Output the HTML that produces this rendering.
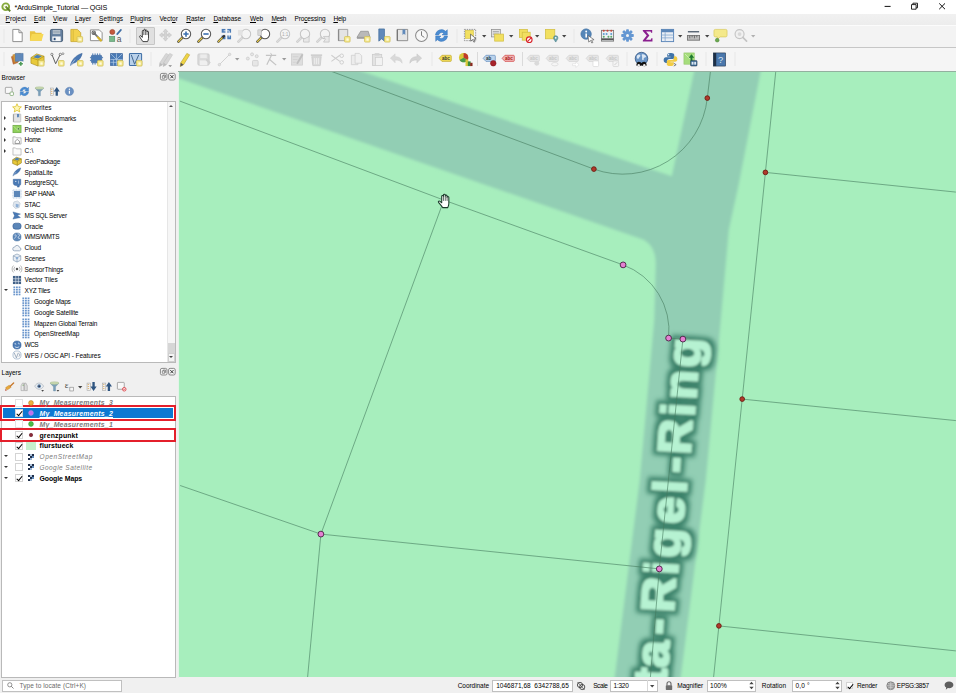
<!DOCTYPE html>
<html lang="en"><head><meta charset="utf-8"><title>*ArduSimple_Tutorial — QGIS</title>
<style>
html,body{margin:0;padding:0}
body{width:956px;height:693px;position:relative;overflow:hidden;background:#f0f0f0;font-family:"Liberation Sans",sans-serif;font-size:6.5px;line-height:10px;color:#000}
.t{position:absolute;white-space:pre;margin:0;padding:0}
.ic{position:absolute;overflow:visible;display:block}
.abs{position:absolute}
u{text-decoration:underline;text-decoration-thickness:.45px;text-underline-offset:.5px}
#titlebar{left:0;top:0;width:956px;height:13.6px;background:#fff}
#menubar{left:0;top:13.6px;width:956px;height:11px;background:linear-gradient(#f1f1f1,#ececec)}
#tb1{left:0;top:24.6px;width:956px;height:22.6px;background:#f3f3f3;border-top:.6px solid #fbfbfb;box-sizing:border-box}
#tb2{left:0;top:47.2px;width:956px;height:23.4px;background:#f5f5f5;border-top:.8px solid #c6c6c6;box-sizing:border-box}
.hd{position:absolute;width:2px;height:14px;background-image:radial-gradient(circle at 50% 50%,#c4c4c4 0,#c4c4c4 .45px,transparent .75px);background-size:2px 2px}
.sep{position:absolute;width:.6px;height:14px;background:#dadada}
#panbg{left:136px;top:27.2px;width:19px;height:17.8px;background:#e0e0e0;border:.6px solid #c6c6c6;border-radius:1px;box-sizing:border-box}
.tree{position:absolute;background:#fff;border:.6px solid #b9b9b9;box-sizing:border-box}
.cb{position:absolute;width:8px;height:8px;background:#fff;border:.6px solid #d4d4d4;box-sizing:border-box}
.cb.on::after{content:"";position:absolute;left:2px;top:-.2px;width:2.2px;height:4.8px;border:solid #000;border-width:0 1.7px 1.7px 0;transform:rotate(40deg)}
.cb.dim{border-color:#e2e2e2}
.arr{position:absolute;width:0;height:0;border-style:solid}
.arr.r{border-width:2px 0 2px 2.6px;border-color:transparent transparent transparent #333}
.arr.d{border-width:2.6px 2px 0 2px;border-color:#333 transparent transparent transparent}
.box{position:absolute;background:#fff;border:.6px solid #c0c0c0;box-sizing:border-box}
.red{position:absolute;border:2.8px solid #e41f2b;box-sizing:border-box}
</style></head><body>

<div id="titlebar" class="abs"></div>
<svg class="ic" style="left:1px;top:1.5px;width:10px;height:10.5px" viewBox="0 0 20 21"><circle cx="9.500" cy="9.500" r="6.800" fill="#fdfdf6" stroke="#86aa3c" stroke-width="3.800"/><path d="M9 9l9.500 9.500" stroke="#5d7f25" stroke-width="3.600"/><path d="M7.500 9l3.500 3.500" stroke="#b8cc5a" stroke-width="1.600"/></svg>
<span class="t" style="left:14.6px;top:2.50px;font-size:7.20px;letter-spacing:-0.160px;">*ArduSimple_Tutorial — QGIS</span>
<svg class="ic" style="left:880px;top:0;width:76px;height:13px" viewBox="880 0 76 13"><path d="M884.600 6.400h6" stroke="#111" stroke-width="1"/><path d="M911.500 4.600h4.600v4.600h-4.600zM912.900 4.600v-1.400h4.600v4.600h-1.400" fill="none" stroke="#111" stroke-width=".9"/><path d="M939.200 3.400l5.800 5.800M945 3.400l-5.800 5.800" stroke="#111" stroke-width="1"/></svg>
<div id="menubar" class="abs"></div>
<span class="t" style="left:5.6px;top:14.00px;font-size:6.50px;letter-spacing:0.050px;"><u>P</u>roject</span>
<span class="t" style="left:34px;top:14.00px;font-size:6.50px;letter-spacing:-0.005px;"><u>E</u>dit</span>
<span class="t" style="left:53px;top:14.00px;font-size:6.50px;letter-spacing:0.079px;"><u>V</u>iew</span>
<span class="t" style="left:75px;top:14.00px;font-size:6.50px;letter-spacing:0.004px;"><u>L</u>ayer</span>
<span class="t" style="left:99px;top:14.00px;font-size:6.50px;letter-spacing:0.087px;"><u>S</u>ettings</span>
<span class="t" style="left:130.3px;top:14.00px;font-size:6.50px;letter-spacing:-0.047px;"><u>P</u>lugins</span>
<span class="t" style="left:159.4px;top:14.00px;font-size:6.50px;letter-spacing:-0.009px;">Vect<u>o</u>r</span>
<span class="t" style="left:186.3px;top:14.00px;font-size:6.50px;letter-spacing:-0.009px;"><u>R</u>aster</span>
<span class="t" style="left:213.4px;top:14.00px;font-size:6.50px;letter-spacing:-0.005px;"><u>D</u>atabase</span>
<span class="t" style="left:250px;top:14.00px;font-size:6.50px;letter-spacing:-0.022px;"><u>W</u>eb</span>
<span class="t" style="left:271.4px;top:14.00px;font-size:6.50px;letter-spacing:-0.327px;"><u>M</u>esh</span>
<span class="t" style="left:294.5px;top:14.00px;font-size:6.50px;letter-spacing:-0.127px;">Pro<u>c</u>essing</span>
<span class="t" style="left:333.4px;top:14.00px;font-size:6.50px;letter-spacing:-0.198px;"><u>H</u>elp</span>
<div id="tb1" class="abs"></div><div id="tb2" class="abs"></div><div id="panbg" class="abs"></div>
<svg class="ic" style="left:9.50px;top:28.20px;width:15px;height:15px;" viewBox="0 0 16 16"><path d="M3 1.5h6.5l3.5 3.5v9.5h-10z" fill="#fff" stroke="#8a8a8a" stroke-width="1"/><path d="M9.5 1.5v3.5h3.5" fill="none" stroke="#8a8a8a" stroke-width="1"/></svg>
<svg class="ic" style="left:29.20px;top:28.20px;width:15px;height:15px;" viewBox="0 0 16 16"><path d="M1 3.5h5l1.2 1.5h6.3v8.5h-12.5z" fill="#e9c341"/><path d="M1 13.5l2-7h12.5l-2 7z" fill="#f7d955"/></svg>
<svg class="ic" style="left:49.20px;top:28.20px;width:15px;height:15px;" viewBox="0 0 16 16"><rect x="1.5" y="1.5" width="13" height="13" rx="1.5" fill="#647f9e" stroke="#4a6078" stroke-width="1"/><rect x="4" y="2.2" width="8" height="4.300" fill="#b9c4cf"/><path d="M4.500 3.600h7M4.500 5h7" stroke="#8a97a5" stroke-width=".6"/><rect x="3.5" y="9" width="9" height="5" fill="#f4f6f8"/><rect x="5" y="10.5" width="2" height="2.5" fill="#2d4f7a"/></svg>
<svg class="ic" style="left:69.00px;top:28.20px;width:15px;height:15px;" viewBox="0 0 16 16"><path d="M2 1.5h7l3.5 3.5v9.5h-10.5z" fill="#f3d24e" stroke="#c8a832" stroke-width=".9"/><path d="M4.5 1.5v13" stroke="#d9b93c" stroke-width="1"/><rect x="8.6" y="9.1" width="5.900" height="5.900" rx=".8" fill="#f5e98e" stroke="#d2bf55" stroke-width=".8"/><path d="M11.8 10.7v3.200M10.2 12.3h3.200M10.7 11.2l2.200 2.200M12.9 11.2l-2.200 2.200" stroke="#fffbe0" stroke-width=".7"/></svg>
<svg class="ic" style="left:88.80px;top:28.20px;width:15px;height:15px;" viewBox="0 0 16 16"><path d="M1.5 2h9.5l3 3v8.5h-12.5z" fill="#fff" stroke="#8a8a8a" stroke-width="1"/><path d="M5 5l7.5 8" stroke="#777" stroke-width="2" stroke-linecap="round"/><path d="M9.5 10l3.2 3.4" stroke="#d9b526" stroke-width="2.2" stroke-linecap="round"/><circle cx="5" cy="5" r="1.8" fill="none" stroke="#666" stroke-width="1.2"/></svg>
<svg class="ic" style="left:107.70px;top:28.20px;width:15px;height:15px;" viewBox="0 0 16 16"><circle cx="4.600" cy="4.200" r="2.700" fill="#c4583c" stroke="#94402a" stroke-width=".6"/><rect x="1.8" y="9" width="5.4" height="5.4" fill="#78b98a" stroke="#4b8a5e" stroke-width=".6"/><path d="M9.800 6.500l4-4.500" stroke="#3f6ea5" stroke-width="1.800" stroke-linecap="round"/><text x="9.400" y="14.700" font-size="9" font-family="Liberation Sans, sans-serif" fill="#555">a</text></svg>
<svg class="ic" style="left:137.90px;top:28.20px;width:15px;height:15px;" viewBox="0 0 16 16"><path d="M5.2 14.5c-1-1.6-2.6-3.6-3.4-5-.5-1 .7-1.8 1.5-1l1.3 1.5v-6.6c0-1.2 1.6-1.2 1.6 0v-1.2c0-1.2 1.7-1.2 1.7 0v.8c0-1.1 1.7-1.1 1.7.1v1c0-1.1 1.6-1 1.6.1v6.8c0 1.3-.5 2.4-1 3.5z" fill="#fff" stroke="#222" stroke-width=".9" stroke-linejoin="round"/><path d="M6.2 3.5v4M7.9 2.5v5M9.6 3.5v4" stroke="#222" stroke-width=".7"/></svg>
<svg class="ic" style="left:157.50px;top:28.20px;width:15px;height:15px;" viewBox="0 0 16 16"><path d="M8 1l2.5 3h-1.5v2.5h2.500v-1.500l3 2.500-3 2.500v-1.500h-2.500v2.500h1.500l-2.500 3-2.500-3h1.500v-2.500h-2.500v1.500l-3-2.500 3-2.500v1.500h2.500v-2.500h-1.500z" fill="#d4d4d4" stroke="#bdbdbd" stroke-width=".5"/></svg>
<svg class="ic" style="left:177.30px;top:28.20px;width:15px;height:15px;" viewBox="0 0 16 16"><path d="M1.5 14.5l5-5" stroke="#333" stroke-width="2.6" stroke-linecap="round"/><path d="M1.6 14.4l4.2-4.2" stroke="#e5c94a" stroke-width="1.5" stroke-linecap="round"/><circle cx="9.6" cy="6.4" r="5" fill="#fff" stroke="#555" stroke-width="1.1"/><path d="M9.600 3.600v5.600M6.800 6.400h5.600" stroke="#3b6fb0" stroke-width="1.700"/></svg>
<svg class="ic" style="left:197.00px;top:28.20px;width:15px;height:15px;" viewBox="0 0 16 16"><path d="M1.5 14.5l5-5" stroke="#333" stroke-width="2.6" stroke-linecap="round"/><path d="M1.6 14.4l4.2-4.2" stroke="#e5c94a" stroke-width="1.5" stroke-linecap="round"/><circle cx="9.6" cy="6.4" r="5" fill="#fff" stroke="#555" stroke-width="1.1"/><path d="M6.800 6.400h5.600" stroke="#3b6fb0" stroke-width="1.700"/></svg>
<svg class="ic" style="left:217.10px;top:28.20px;width:15px;height:15px;" viewBox="0 0 16 16"><g fill="#4a7ab5"><rect x="5" y="1" width="4" height="4"/><rect x="11" y="1" width="4" height="4"/><rect x="11" y="8" width="4" height="4"/><rect x="5" y="8" width="4" height="4"/></g><path d="M7 3h6M13 3v7" stroke="#fff" stroke-width=".8"/><path d="M1.500 14.500l6-6" stroke="#333" stroke-width="2.400" stroke-linecap="round"/><path d="M1.600 14.400l3.800-3.800" stroke="#e5c94a" stroke-width="1.400" stroke-linecap="round"/></svg>
<svg class="ic" style="left:236.50px;top:28.20px;width:15px;height:15px;" viewBox="0 0 16 16"><path d="M1.5 14.5l5-5" stroke="#c8c8c8" stroke-width="2.6" stroke-linecap="round"/><path d="M1.6 14.4l4.2-4.2" stroke="#dcdcdc" stroke-width="1.5" stroke-linecap="round"/><circle cx="9.6" cy="6.4" r="5" fill="#f4f4f4" stroke="#c4c4c4" stroke-width="1.1"/><rect x="1" y="2" width="5" height="6" fill="#e2e2e2"/></svg>
<svg class="ic" style="left:256.10px;top:28.20px;width:15px;height:15px;" viewBox="0 0 16 16"><path d="M1.5 14.5l5-5" stroke="#333" stroke-width="2.6" stroke-linecap="round"/><path d="M1.6 14.4l4.2-4.2" stroke="#e5c94a" stroke-width="1.5" stroke-linecap="round"/><circle cx="9.6" cy="6.4" r="5" fill="#fff" stroke="#555" stroke-width="1.1"/><rect x="2" y="2" width="4" height="6" fill="#d9d9d9" stroke="#aaa" stroke-width=".5"/></svg>
<svg class="ic" style="left:275.80px;top:28.20px;width:15px;height:15px;" viewBox="0 0 16 16"><path d="M1.5 14.5l5-5" stroke="#c8c8c8" stroke-width="2.6" stroke-linecap="round"/><path d="M1.6 14.4l4.2-4.2" stroke="#dcdcdc" stroke-width="1.5" stroke-linecap="round"/><circle cx="9.6" cy="6.4" r="5" fill="#f4f4f4" stroke="#c4c4c4" stroke-width="1.1"/><text x="6.300" y="8" font-size="5" font-family="Liberation Sans, sans-serif" fill="#aaa">1:1</text></svg>
<svg class="ic" style="left:296.00px;top:28.20px;width:15px;height:15px;" viewBox="0 0 16 16"><path d="M1.5 14.5l5-5" stroke="#c8c8c8" stroke-width="2.6" stroke-linecap="round"/><path d="M1.6 14.4l4.2-4.2" stroke="#dcdcdc" stroke-width="1.5" stroke-linecap="round"/><circle cx="9.6" cy="6.4" r="5" fill="#f4f4f4" stroke="#c4c4c4" stroke-width="1.1"/><path d="M14 9v6h-6l0-3z" fill="#e8e8e8" stroke="#c0c0c0" stroke-width=".8"/></svg>
<svg class="ic" style="left:315.70px;top:28.20px;width:15px;height:15px;" viewBox="0 0 16 16"><path d="M1.5 14.5l5-5" stroke="#c8c8c8" stroke-width="2.6" stroke-linecap="round"/><path d="M1.6 14.4l4.2-4.2" stroke="#dcdcdc" stroke-width="1.5" stroke-linecap="round"/><circle cx="9.6" cy="6.4" r="5" fill="#f4f4f4" stroke="#c4c4c4" stroke-width="1.1"/><path d="M8 9h6v6h-6l2-3z" fill="#e8e8e8" stroke="#c0c0c0" stroke-width=".8"/></svg>
<svg class="ic" style="left:335.50px;top:28.20px;width:15px;height:15px;" viewBox="0 0 16 16"><path d="M2.500 1.500h10v12h-10z" fill="#e4e4e4" stroke="#9a9a9a" stroke-width=".9"/><path d="M2.800 1.500v12" stroke="#8a8a8a" stroke-width="1.300"/><rect x="9.1" y="9.1" width="5.900" height="5.900" rx=".8" fill="#f5e98e" stroke="#d2bf55" stroke-width=".8"/><path d="M12.3 10.7v3.200M10.7 12.3h3.200M11.2 11.2l2.200 2.200M13.4 11.2l-2.200 2.200" stroke="#fffbe0" stroke-width=".7"/></svg>
<svg class="ic" style="left:355.50px;top:28.20px;width:15px;height:15px;" viewBox="0 0 16 16"><path d="M1 10l4-6.500h8l2 6.500z" fill="#b9b9b9" stroke="#8f8f8f" stroke-width=".8"/><path d="M1 10h14v1.500h-14z" fill="#999"/><rect x="9.1" y="9.1" width="5.900" height="5.900" rx=".8" fill="#f5e98e" stroke="#d2bf55" stroke-width=".8"/><path d="M12.3 10.7v3.200M10.7 12.3h3.200M11.2 11.2l2.200 2.200M13.4 11.2l-2.200 2.200" stroke="#fffbe0" stroke-width=".7"/></svg>
<svg class="ic" style="left:376.00px;top:28.20px;width:15px;height:15px;" viewBox="0 0 16 16"><path d="M3 1h6v13l-3-2.500-3 2.500z" fill="#6089ba" stroke="#46709f" stroke-width=".8"/><rect x="9.1" y="9.1" width="5.900" height="5.900" rx=".8" fill="#f5e98e" stroke="#d2bf55" stroke-width=".8"/><path d="M12.3 10.7v3.200M10.7 12.3h3.200M11.2 11.2l2.200 2.200M13.4 11.2l-2.200 2.200" stroke="#fffbe0" stroke-width=".7"/></svg>
<svg class="ic" style="left:394.50px;top:28.20px;width:15px;height:15px;" viewBox="0 0 16 16"><path d="M2.500 1.500h11v12h-11z" fill="#e6e6e6" stroke="#8c8c8c" stroke-width="1"/><path d="M2.500 1.500v12" stroke="#777" stroke-width="1.400"/><path d="M8 1.500h3v6l-1.500-1.300-1.500 1.300z" fill="#6089ba"/></svg>
<svg class="ic" style="left:414.10px;top:28.20px;width:15px;height:15px;" viewBox="0 0 16 16"><circle cx="8" cy="8" r="6.300" fill="#f8f8f8" stroke="#8a8a8a" stroke-width="1.100"/><path d="M8 3.500v4.500l3 2" fill="none" stroke="#666" stroke-width=".9"/></svg>
<svg class="ic" style="left:434.00px;top:28.20px;width:15px;height:15px;" viewBox="0 0 16 16"><path d="M1.500 7.500a6.500 6.500 0 0 1 11-4l1.700-1.700v5.700h-5.700l1.900-1.900a3.300 3.300 0 0 0-5.400 1.900z" fill="#4a8cd2" stroke="#3a74b8" stroke-width=".5"/><path d="M14.500 8.500a6.500 6.500 0 0 1-11 4l-1.700 1.700v-5.700h5.700l-1.900 1.900a3.300 3.300 0 0 0 5.400-1.900z" fill="#4a8cd2" stroke="#3a74b8" stroke-width=".5"/></svg>
<svg class="ic" style="left:462.90px;top:28.20px;width:15px;height:15px;" viewBox="0 0 16 16"><rect x="1.500" y="1.500" width="12" height="12" fill="none" stroke="#777" stroke-width=".8" stroke-dasharray="1.500 1"/><rect x="2.500" y="2.500" width="8.500" height="8.500" fill="#f2e060" stroke="#d2c044" stroke-width=".7"/><path d="M8 6.500l6 5-2.600.3 1.400 2.700-1.200.600-1.400-2.800-2 1.700z" fill="#fff" stroke="#444" stroke-width=".7"/></svg>
<svg class="ic" style="left:490.30px;top:28.20px;width:15px;height:15px;" viewBox="0 0 16 16"><rect x="1.500" y="1.500" width="9.500" height="8" fill="#e4e4e4" stroke="#8d8d8d" stroke-width=".8"/><path d="M3 4h6.500M3 6.500h6.500" stroke="#999" stroke-width="1"/><rect x="5" y="6.500" width="9.500" height="7.500" fill="#f2e060" stroke="#d2c044" stroke-width=".8"/></svg>
<svg class="ic" style="left:517.50px;top:28.20px;width:15px;height:15px;" viewBox="0 0 16 16"><rect x="1.500" y="1.500" width="8.500" height="8.500" fill="#f2e060" stroke="#d2c044" stroke-width=".8"/><rect x="4.500" y="4.500" width="8.500" height="8.500" fill="#f2e060" stroke="#d2c044" stroke-width=".8"/><circle cx="12" cy="12.500" r="3" fill="#fff" stroke="#d8232a" stroke-width="1.200"/><path d="M10 14.500l4-4" stroke="#d8232a" stroke-width="1.100"/></svg>
<svg class="ic" style="left:544.00px;top:28.20px;width:15px;height:15px;" viewBox="0 0 16 16"><rect x="1.500" y="1.500" width="10" height="10" fill="#f2e060" stroke="#d2c044" stroke-width=".8"/><path d="M12.500 15c-1.500-2.300-2.300-3.300-2.300-4.500a2.300 2.300 0 0 1 4.600 0c0 1.200-.8 2.200-2.300 4.500z" fill="#6aa3ad" stroke="#3f7882" stroke-width=".6"/><circle cx="12.500" cy="10.500" r=".9" fill="#fff"/></svg>
<svg class="ic" style="left:580.30px;top:28.20px;width:15px;height:15px;" viewBox="0 0 16 16"><circle cx="6.500" cy="6.500" r="5.600" fill="#5586b8" stroke="#3d6c9e" stroke-width=".6"/><path d="M6.600 5.800v4.200" stroke="#fff" stroke-width="1.700"/><circle cx="6.600" cy="3.700" r="1" fill="#fff"/><path d="M8.500 8l6.500 4.500-2.700.4 1.400 2.600-1.100.500-1.400-2.700-1.900 1.700z" fill="#fff" stroke="#555" stroke-width=".7"/></svg>
<svg class="ic" style="left:600.10px;top:28.20px;width:15px;height:15px;" viewBox="0 0 16 16"><rect x="1.500" y="2.500" width="13" height="11.500" fill="#eef1f3" stroke="#777" stroke-width=".9"/><path d="M1.500 12h13" stroke="#555" stroke-width="2"/><g fill="#c9473a"><circle cx="4" cy="3" r="1.100"/><circle cx="8" cy="3" r="1.100"/><circle cx="12" cy="3" r="1.100"/></g><g fill="#5d9ad0"><circle cx="4" cy="6.300" r="1.100"/><circle cx="7" cy="6.300" r="1.100"/><circle cx="12" cy="6.300" r="1.100"/></g><g fill="#5aa86a"><circle cx="4" cy="9.300" r="1.100"/><circle cx="9" cy="9.300" r="1.100"/><circle cx="12" cy="9.300" r="1.100"/></g></svg>
<svg class="ic" style="left:620.00px;top:28.20px;width:15px;height:15px;" viewBox="0 0 16 16"><g fill="#6497d2"><circle cx="8" cy="8" r="4.600"/><rect x="6.500" y="1.300" width="3" height="13.400" rx=".8" transform="rotate(0 8 8)"/><rect x="6.500" y="1.300" width="3" height="13.400" rx=".8" transform="rotate(45 8 8)"/><rect x="6.500" y="1.300" width="3" height="13.400" rx=".8" transform="rotate(90 8 8)"/><rect x="6.500" y="1.300" width="3" height="13.400" rx=".8" transform="rotate(135 8 8)"/></g><circle cx="8" cy="8" r="1.600" fill="#f3f3f3"/></svg>
<svg class="ic" style="left:639.80px;top:28.20px;width:15px;height:15px;" viewBox="0 0 16 16"><path d="M3 2h10v3h-1.200l-.5-1.300h-4.800l3.500 4.300-3.700 4.500h5.200l.6-1.500h1.200v3.500h-10.300v-1.200l4.200-5.200-4.200-5z" fill="#8a1f8f"/></svg>
<svg class="ic" style="left:659.50px;top:28.20px;width:15px;height:15px;" viewBox="0 0 16 16"><rect x="1.500" y="1.500" width="13" height="13" fill="#e9eef5" stroke="#5b86b8" stroke-width="1"/><rect x="1.500" y="1.500" width="13" height="3" fill="#5b86b8"/><path d="M5.500 4.500v10M1.500 7.500h13M1.500 10.500h13" stroke="#7fa3cc" stroke-width=".8"/></svg>
<svg class="ic" style="left:686.30px;top:28.20px;width:15px;height:15px;" viewBox="0 0 16 16"><path d="M2 4h12" stroke="#4d5b6b" stroke-width="1.400"/><rect x="1.500" y="8" width="13" height="5" fill="#bdbdbd" stroke="#6e6e6e" stroke-width=".9"/><path d="M4 8v3M6.500 8v2M9 8v3M11.500 8v2" stroke="#555" stroke-width=".8"/></svg>
<svg class="ic" style="left:713.00px;top:28.20px;width:15px;height:15px;" viewBox="0 0 16 16"><path d="M2.500 1.500h11a1.500 1.500 0 0 1 1.500 1.500v5a1.500 1.500 0 0 1-1.500 1.500h-6l-3 3v-3h-2a1.500 1.500 0 0 1-1.500-1.500v-5a1.500 1.500 0 0 1 1.500-1.500z" fill="#f4e98a" stroke="#d6c658" stroke-width=".7"/><circle cx="4.500" cy="13" r="2" fill="#6aa84f" stroke="#4b8536" stroke-width=".5"/></svg>
<svg class="ic" style="left:732.80px;top:28.20px;width:15px;height:15px;" viewBox="0 0 16 16"><circle cx="7" cy="6.500" r="4.800" fill="#f0f0f0" stroke="#c4c4c4" stroke-width="1.200"/><circle cx="7" cy="6.500" r="2" fill="#d8d8d8"/><path d="M10.500 10l4 4" stroke="#c4c4c4" stroke-width="1.800" stroke-linecap="round"/></svg>
<svg class="ic" style="left:481.60px;top:34.70px;width:4.400px;height:2.600px" viewBox="0 0 5 3"><path d="M0 0h5l-2.500 3z" fill="#444"/></svg>
<svg class="ic" style="left:508.60px;top:34.70px;width:4.400px;height:2.600px" viewBox="0 0 5 3"><path d="M0 0h5l-2.500 3z" fill="#444"/></svg>
<svg class="ic" style="left:535.30px;top:34.70px;width:4.400px;height:2.600px" viewBox="0 0 5 3"><path d="M0 0h5l-2.500 3z" fill="#444"/></svg>
<svg class="ic" style="left:562.30px;top:34.70px;width:4.400px;height:2.600px" viewBox="0 0 5 3"><path d="M0 0h5l-2.500 3z" fill="#444"/></svg>
<svg class="ic" style="left:677.80px;top:34.70px;width:4.400px;height:2.600px" viewBox="0 0 5 3"><path d="M0 0h5l-2.500 3z" fill="#444"/></svg>
<svg class="ic" style="left:704.80px;top:34.70px;width:4.400px;height:2.600px" viewBox="0 0 5 3"><path d="M0 0h5l-2.500 3z" fill="#444"/></svg>
<svg class="ic" style="left:751.40px;top:34.70px;width:4.400px;height:2.600px" viewBox="0 0 5 3"><path d="M0 0h5l-2.500 3z" fill="#b0b0b0"/></svg>
<i class="hd" style="left:2.50px;top:28.70px"></i>
<i class="hd" style="left:128.50px;top:28.70px"></i>
<i class="hd" style="left:455.50px;top:28.70px"></i>
<i class="hd" style="left:573.20px;top:28.70px"></i>
<svg class="ic" style="left:10.20px;top:51.70px;width:15px;height:15px;" viewBox="0 0 16 16"><path d="M1.500 5l7-2.500 2 8-7 2.500z" fill="#c8743a" stroke="#9c5524" stroke-width=".5"/><path d="M3 3l8-1.500 1.500 8-8 1.500z" fill="#e0a13c" stroke="#b57b22" stroke-width=".5"/><path d="M5.500 1.500h8.500v8.500h-8.500z" fill="#6089ba" stroke="#46709f" stroke-width=".5"/><circle cx="11.500" cy="12.500" r="3" fill="#fff"/><path d="M11.500 10.300v4.400M9.300 12.500h4.400" stroke="#4d9a57" stroke-width="1.800"/></svg>
<svg class="ic" style="left:29.90px;top:51.70px;width:15px;height:15px;" viewBox="0 0 16 16"><path d="M1 6l6-4 8 2.500v6.500l-6.500 4-7.500-3z" fill="#e8c93a" stroke="#a98e1e" stroke-width=".7"/><path d="M3.500 5.500l4-2.700 5 1.600-3.800 2.600z" fill="#4a7fb8"/><path d="M1 6l7.500 2.500 6.500-4M8.500 8.500v6.500" fill="none" stroke="#a98e1e" stroke-width=".7"/><rect x="9.1" y="9.1" width="5.900" height="5.900" rx=".8" fill="#f5e98e" stroke="#d2bf55" stroke-width=".8"/><path d="M12.3 10.7v3.200M10.7 12.3h3.200M11.2 11.2l2.200 2.200M13.4 11.2l-2.200 2.200" stroke="#fffbe0" stroke-width=".7"/></svg>
<svg class="ic" style="left:49.50px;top:51.70px;width:15px;height:15px;" viewBox="0 0 16 16"><path d="M2 2.500l4 10 5-10" fill="none" stroke="#555" stroke-width="1"/><circle cx="2" cy="2.500" r="1.200" fill="#fff" stroke="#555" stroke-width=".7"/><circle cx="11" cy="2.500" r="1.200" fill="#fff" stroke="#555" stroke-width=".7"/><circle cx="13.800" cy="1.800" r="1" fill="#fff" stroke="#555" stroke-width=".6"/><rect x="9.1" y="9.1" width="5.900" height="5.900" rx=".8" fill="#f5e98e" stroke="#d2bf55" stroke-width=".8"/><path d="M12.3 10.7v3.200M10.7 12.3h3.200M11.2 11.2l2.200 2.200M13.4 11.2l-2.200 2.200" stroke="#fffbe0" stroke-width=".7"/></svg>
<svg class="ic" style="left:69.00px;top:51.70px;width:15px;height:15px;" viewBox="0 0 16 16"><path d="M1.500 14.500c1-5 5-11 12.500-13-1 5-4.500 9-9.500 10.500z" fill="#4a78b3" stroke="#2e5a94" stroke-width=".6"/><path d="M1.500 14.500l5-6.500" stroke="#dfe8f3" stroke-width=".6"/><rect x="9.1" y="9.1" width="5.900" height="5.900" rx=".8" fill="#f5e98e" stroke="#d2bf55" stroke-width=".8"/><path d="M12.3 10.7v3.200M10.7 12.3h3.200M11.2 11.2l2.200 2.200M13.4 11.2l-2.200 2.200" stroke="#fffbe0" stroke-width=".7"/></svg>
<svg class="ic" style="left:89.00px;top:51.70px;width:15px;height:15px;" viewBox="0 0 16 16"><rect x="2.500" y="3.500" width="11" height="8" rx="1" fill="#4a7ab5" stroke="#2e5a94" stroke-width=".6"/><path d="M4 3.500v-2M6.500 3.500v-2M9 3.500v-2M11.500 3.500v-2M4 11.500v2M6.500 11.500v2M1 6h1.500M1 9h1.500M13.500 6h1.500" stroke="#4a7ab5" stroke-width="1"/><rect x="9.1" y="9.1" width="5.900" height="5.900" rx=".8" fill="#f5e98e" stroke="#d2bf55" stroke-width=".8"/><path d="M12.3 10.7v3.200M10.7 12.3h3.200M11.2 11.2l2.200 2.200M13.4 11.2l-2.200 2.200" stroke="#fffbe0" stroke-width=".7"/></svg>
<svg class="ic" style="left:108.80px;top:51.70px;width:15px;height:15px;" viewBox="0 0 16 16"><rect x="1.500" y="1.500" width="13" height="13" fill="#4a7ab5" stroke="#2e5a94" stroke-width=".6"/><path d="M1.500 8h13M8 1.500v13M1.500 1.500l6.500 6.500M14.500 1.500l-6.500 6.500M1.500 11h13M4.700 8v6.500M11.300 8v6.500" stroke="#b9cfe8" stroke-width=".7"/><rect x="9.1" y="9.1" width="5.900" height="5.900" rx=".8" fill="#f5e98e" stroke="#d2bf55" stroke-width=".8"/><path d="M12.3 10.7v3.200M10.7 12.3h3.200M11.2 11.2l2.200 2.200M13.4 11.2l-2.200 2.200" stroke="#fffbe0" stroke-width=".7"/></svg>
<svg class="ic" style="left:128.30px;top:51.70px;width:15px;height:15px;" viewBox="0 0 16 16"><rect x="1.500" y="1.500" width="13" height="13" rx="1" fill="#b9d1ea" stroke="#3f6fa6" stroke-width="1.100"/><path d="M3.500 3l3.500 10 4.500-10" fill="none" stroke="#3a5f8a" stroke-width="1"/><rect x="9.1" y="9.1" width="5.900" height="5.900" rx=".8" fill="#f5e98e" stroke="#d2bf55" stroke-width=".8"/><path d="M12.3 10.7v3.200M10.7 12.3h3.200M11.2 11.2l2.200 2.200M13.4 11.2l-2.200 2.200" stroke="#fffbe0" stroke-width=".7"/></svg>
<svg class="ic" style="left:158.00px;top:51.70px;width:15px;height:15px;" viewBox="0 0 16 16"><g transform="translate(-2 0)"><path d="M10.500 1.500l3 1.500-6.500 10.500-3.500 2 .5-4z" fill="#d6d6d6" stroke="#c2c2c2" stroke-width=".6"/><path d="M4 11.500l3 2-3.500 2z" fill="#bbb"/></g><g transform="translate(2 0)"><path d="M10.500 1.500l3 1.500-6.500 10.500-3.500 2 .5-4z" fill="#d6d6d6" stroke="#c2c2c2" stroke-width=".6"/><path d="M4 11.500l3 2-3.500 2z" fill="#bbb"/></g><path d="M11 14h4l-2 2z" fill="#888"/></svg>
<svg class="ic" style="left:176.90px;top:51.70px;width:15px;height:15px;" viewBox="0 0 16 16"><path d="M10.500 1.500l3 1.500-6.500 10.500-3.500 2 .5-4z" fill="#efd445" stroke="#b39a25" stroke-width=".6"/><path d="M4 11.500l3 2-3.500 2z" fill="#555"/></svg>
<svg class="ic" style="left:196.40px;top:51.70px;width:15px;height:15px;" viewBox="0 0 16 16"><rect x="2" y="2" width="12" height="12" rx="1.200" fill="#dadada" stroke="#c6c6c6" stroke-width=".8"/><rect x="4.500" y="2.500" width="7" height="4" fill="#ececec"/><rect x="4" y="9" width="8" height="5" fill="#efefef"/><path d="M11 8l4 4" stroke="#d0d0d0" stroke-width="2"/></svg>
<svg class="ic" style="left:216.80px;top:51.70px;width:15px;height:15px;" viewBox="0 0 16 16"><path d="M2.500 13.500l11-11" stroke="#cfcfcf" stroke-width="1"/><circle cx="2.500" cy="13.500" r="1.300" fill="#e4e4e4" stroke="#c4c4c4" stroke-width=".6"/><circle cx="13.500" cy="2.500" r="1.300" fill="#e4e4e4" stroke="#c4c4c4" stroke-width=".6"/></svg>
<svg class="ic" style="left:244.50px;top:51.70px;width:15px;height:15px;" viewBox="0 0 16 16"><g fill="#e6e6e6" stroke="#c6c6c6" stroke-width=".7"><circle cx="3" cy="7" r="1.600"/><circle cx="7.500" cy="2.500" r="1.600"/><circle cx="12.500" cy="4.500" r="1.600"/><rect x="8" y="9" width="6" height="6" rx="1"/></g></svg>
<svg class="ic" style="left:263.50px;top:51.70px;width:15px;height:15px;" viewBox="0 0 16 16"><path d="M2 3.500h11M8 3.500l-5 10M6 8l7 6" fill="none" stroke="#c4c4c4" stroke-width="1.300"/><path d="M7 1l1.500 2.500" stroke="#c4c4c4" stroke-width="1"/></svg>
<svg class="ic" style="left:290.00px;top:51.70px;width:15px;height:15px;" viewBox="0 0 16 16"><rect x="1.500" y="2" width="12" height="12" fill="#dedede" stroke="#cacaca" stroke-width=".7"/><path d="M13.500 2.500l-6 10" stroke="#c0c0c0" stroke-width="2"/><path d="M3 5h6M3 8h5M3 11h3" stroke="#cfcfcf" stroke-width=".8"/></svg>
<svg class="ic" style="left:309.10px;top:51.70px;width:15px;height:15px;" viewBox="0 0 16 16"><path d="M3 5h10l-1 9.500h-8z" fill="#d9d9d9" stroke="#c4c4c4" stroke-width=".7"/><rect x="2" y="2.500" width="12" height="2" fill="#cfcfcf"/><path d="M6 6.500v6.500M8 6.500v6.500M10 6.500v6.500" stroke="#efefef" stroke-width=".9"/></svg>
<svg class="ic" style="left:330.00px;top:51.70px;width:15px;height:15px;" viewBox="0 0 16 16"><path d="M1.500 3.500l9 6.500M1.500 10l9-6.500" stroke="#cdcdcd" stroke-width="1.100"/><circle cx="12.500" cy="4" r="1.900" fill="none" stroke="#cdcdcd" stroke-width="1"/><circle cx="12.500" cy="11" r="1.900" fill="none" stroke="#cdcdcd" stroke-width="1"/></svg>
<svg class="ic" style="left:349.10px;top:51.70px;width:15px;height:15px;" viewBox="0 0 16 16"><path d="M2.500 3.500h5l2 2v8h-7z" fill="#ececec" stroke="#cdcdcd" stroke-width=".8"/><path d="M6.500 1.500h4.500l2.500 2.500v8h-7z" fill="#f0f0f0" stroke="#cdcdcd" stroke-width=".8"/></svg>
<svg class="ic" style="left:369.50px;top:51.70px;width:15px;height:15px;" viewBox="0 0 16 16"><rect x="2.500" y="2.500" width="10" height="12" fill="#e3e3e3" stroke="#cacaca" stroke-width=".8"/><rect x="5" y="1.200" width="5" height="2.600" fill="#d4d4d4"/><rect x="6" y="6" width="7.500" height="8.500" fill="#f2f2f2" stroke="#cdcdcd" stroke-width=".7"/></svg>
<svg class="ic" style="left:389.20px;top:51.70px;width:15px;height:15px;" viewBox="0 0 16 16"><path d="M1.500 6.500l5-4.500v3c5 0 7.500 2.500 7.500 7-1.500-2.500-3.500-3.500-7.500-3.500v3z" fill="#d9d9d9" stroke="#cecece" stroke-width=".5"/></svg>
<svg class="ic" style="left:408.20px;top:51.70px;width:15px;height:15px;" viewBox="0 0 16 16"><path d="M14.500 6.500l-5-4.500v3c-5 0-7.500 2.500-7.500 7 1.500-2.500 3.500-3.500 7.500-3.500v3z" fill="#d3d3d3" stroke="#c4c4c4" stroke-width=".5"/></svg>
<svg class="ic" style="left:437.50px;top:51.70px;width:15px;height:15px;" viewBox="0 0 16 16"><path d="M4.200 3.500h9a1 1 0 0 1 1 1v4.500a1 1 0 0 1-1 1h-9l-3-3.200z" fill="#f1dc58" stroke="#bfa52c" stroke-width=".7"/><text x="4.300" y="8.600" font-size="4.800" font-weight="700" font-family="Liberation Sans, sans-serif" fill="#333">abc</text></svg>
<svg class="ic" style="left:457.70px;top:51.70px;width:15px;height:15px;" viewBox="0 0 16 16"><circle cx="6" cy="6" r="5" fill="#d9c93a"/><path d="M6 6v-5a5 5 0 0 1 4.300 7.500z" fill="#c0392b"/><path d="M6 6l4.300 2.500a5 5 0 0 1-8.600 0z" fill="#4a9a4a"/><rect x="8" y="8" width="3" height="7" fill="#d9c93a"/><rect x="10.500" y="10" width="3" height="5" fill="#3b8a3b"/><rect x="13" y="11.500" width="2.500" height="3.500" fill="#8a2a1f"/></svg>
<svg class="ic" style="left:481.50px;top:51.70px;width:15px;height:15px;" viewBox="0 0 16 16"><path d="M4.200 3.500h9a1 1 0 0 1 1 1v4.500a1 1 0 0 1-1 1h-9l-3-3.200z" fill="#bcd3ec" stroke="#5b86b8" stroke-width=".7"/><text x="4.300" y="8.600" font-size="4.800" font-weight="700" font-family="Liberation Sans, sans-serif" fill="#234">ab</text><circle cx="12" cy="12" r="3" fill="#a8232a" stroke="#7a1218" stroke-width=".5"/></svg>
<svg class="ic" style="left:501.20px;top:51.70px;width:15px;height:15px;" viewBox="0 0 16 16"><path d="M4.200 3.500h9a1 1 0 0 1 1 1v4.500a1 1 0 0 1-1 1h-9l-3-3.200z" fill="#f0b4b4" stroke="#cf3a3a" stroke-width=".7"/><text x="4.300" y="8.600" font-size="4.800" font-weight="700" font-family="Liberation Sans, sans-serif" fill="#a11">abc</text></svg>
<svg class="ic" style="left:525.70px;top:51.70px;width:15px;height:15px;" viewBox="0 0 16 16"><path d="M4.200 3.500h9a1 1 0 0 1 1 1v4.500a1 1 0 0 1-1 1h-9l-3-3.200z" fill="#e6e6e6" stroke="#cfcfcf" stroke-width=".7"/><text x="4.300" y="8.600" font-size="4.800" font-weight="700" font-family="Liberation Sans, sans-serif" fill="#c6c6c6">abc</text><circle cx="11.500" cy="12" r="2.600" fill="#dadada"/></svg>
<svg class="ic" style="left:544.70px;top:51.70px;width:15px;height:15px;" viewBox="0 0 16 16"><path d="M4.200 3.500h9a1 1 0 0 1 1 1v4.500a1 1 0 0 1-1 1h-9l-3-3.200z" fill="#e6e6e6" stroke="#cfcfcf" stroke-width=".7"/><text x="4.300" y="8.600" font-size="4.800" font-weight="700" font-family="Liberation Sans, sans-serif" fill="#c6c6c6">abc</text><ellipse cx="10.500" cy="13" rx="3.500" ry="1.800" fill="#f6f6f6" stroke="#cfcfcf" stroke-width=".6"/></svg>
<svg class="ic" style="left:565.30px;top:51.70px;width:15px;height:15px;" viewBox="0 0 16 16"><path d="M4.200 3.500h9a1 1 0 0 1 1 1v4.500a1 1 0 0 1-1 1h-9l-3-3.200z" fill="#e6e6e6" stroke="#cfcfcf" stroke-width=".7"/><text x="4.300" y="8.600" font-size="4.800" font-weight="700" font-family="Liberation Sans, sans-serif" fill="#c6c6c6">abc</text><path d="M8 12.500h3.500v-2l3.500 3-3.500 3v-2h-3.500z" fill="#fff" stroke="#d6d6d6" stroke-width=".5"/></svg>
<svg class="ic" style="left:584.50px;top:51.70px;width:15px;height:15px;" viewBox="0 0 16 16"><path d="M4.200 3.500h9a1 1 0 0 1 1 1v4.500a1 1 0 0 1-1 1h-9l-3-3.200z" fill="#e6e6e6" stroke="#cfcfcf" stroke-width=".7"/><text x="4.300" y="8.600" font-size="4.800" font-weight="700" font-family="Liberation Sans, sans-serif" fill="#c6c6c6">abc</text><rect x="8.500" y="9.500" width="6" height="6" rx="1" fill="#fff" stroke="#d6d6d6" stroke-width=".7"/></svg>
<svg class="ic" style="left:604.50px;top:51.70px;width:15px;height:15px;" viewBox="0 0 16 16"><path d="M4.200 3.500h9a1 1 0 0 1 1 1v4.500a1 1 0 0 1-1 1h-9l-3-3.200z" fill="#e6e6e6" stroke="#cfcfcf" stroke-width=".7"/><text x="4.300" y="8.600" font-size="4.800" font-weight="700" font-family="Liberation Sans, sans-serif" fill="#c6c6c6">abc</text><rect x="8.500" y="9.500" width="6" height="6" rx="1" fill="#f4f4f4" stroke="#d0d0d0" stroke-width=".7"/><path d="M10 14l3-3" stroke="#ccc" stroke-width="1"/></svg>
<svg class="ic" style="left:633.50px;top:51.70px;width:15px;height:15px;" viewBox="0 0 16 16"><circle cx="8" cy="7" r="6.700" fill="#6a95c6" stroke="#2a4e7c" stroke-width=".8"/><path d="M3 4c1.500-1.800 3.500-1.500 3.800-.3.300 1.200-1.300 1.500-1.500 2.800-.2 1.300-1.500.8-2.300-.2z M8.500 2.500c2-.5 4 .5 4.500 2.500-.8 1-2 .5-2.500 1.500s.5 2-.8 2.200c-1 .1-1.200-1.500-1-2.700.2-1-.8-2.500-.2-3.500z" fill="#dce8f5"/><path d="M2.500 14.500c0-2.500 1-4 2.700-4s2.300 1.200 2.800 1.200 1.100-1.200 2.800-1.200 2.700 1.500 2.700 4c-1.500 1-3.600 1-5 0h-1c-1.400 1-3.500 1-5 0z" fill="#111"/><circle cx="5" cy="14" r="1.300" fill="#eee"/><circle cx="11" cy="14" r="1.300" fill="#eee"/></svg>
<svg class="ic" style="left:662.90px;top:51.70px;width:15px;height:15px;" viewBox="0 0 16 16"><path d="M7.800 1c-2.200 0-3.300.9-3.300 2.300v1.700h3.600v.6h-5c-1.500 0-2.400 1.200-2.400 3s.9 3 2.400 3h1.300v-1.900c0-1.400 1.100-2.300 2.500-2.300h3.200c1.100 0 1.900-.8 1.900-1.900v-2.200c0-1.400-1.300-2.300-3.200-2.300z" fill="#3f73a8"/><path d="M8.200 15c2.200 0 3.300-.9 3.300-2.300v-1.700h-3.600v-.6h5c1.500 0 2.400-1.200 2.400-3s-.9-3-2.400-3h-1.300v1.900c0 1.400-1.100 2.300-2.500 2.300h-3.200c-1.100 0-1.900.8-1.900 1.900v2.200c0 1.400 1.300 2.300 3.200 2.300z" fill="#f2cc44"/><circle cx="6" cy="2.800" r=".7" fill="#fff"/><path d="M11.500 12l2.500 1.500-2.500 1.500" fill="none" stroke="#555" stroke-width=".8"/></svg>
<svg class="ic" style="left:682.70px;top:51.70px;width:15px;height:15px;" viewBox="0 0 16 16"><rect x="1" y="1" width="11" height="12" fill="#a6dd7c" stroke="#8cc263" stroke-width=".6"/><path d="M2 2l6 6M8 8l4-5" stroke="#d6f0c0" stroke-width=".8"/><path d="M9 2.500l3 3.500h-2v4h-2v-4h-2z" fill="#1f7a2e"/><rect x="8" y="9" width="7" height="6" rx="1" fill="#3d6a94" stroke="#234" stroke-width=".5"/><rect x="9.200" y="10.500" width="2" height="3" fill="#dfe9f3"/><rect x="12" y="10.500" width="2" height="3" fill="#dfe9f3"/></svg>
<svg class="ic" style="left:712.10px;top:51.70px;width:15px;height:15px;" viewBox="0 0 16 16"><rect x="1.500" y="1" width="13" height="14" fill="#4a78ad" stroke="#1d2f45" stroke-width=".6"/><rect x="1.500" y="1" width="3" height="14" fill="#1d2f45"/><text x="6.500" y="12" font-size="10" font-family="Liberation Sans, sans-serif" fill="#dce8f5">?</text></svg>
<svg class="ic" style="left:235.10px;top:58.40px;width:4.400px;height:2.600px" viewBox="0 0 5 3"><path d="M0 0h5l-2.500 3z" fill="#999"/></svg>
<svg class="ic" style="left:281.80px;top:58.40px;width:4.400px;height:2.600px" viewBox="0 0 5 3"><path d="M0 0h5l-2.500 3z" fill="#999"/></svg>
<i class="hd" style="left:2.50px;top:52.20px"></i>
<i class="hd" style="left:150.00px;top:52.20px"></i>
<i class="hd" style="left:431.20px;top:52.20px"></i>
<i class="hd" style="left:626.00px;top:52.20px"></i>
<i class="hd" style="left:656.00px;top:52.20px"></i>
<i class="hd" style="left:704.50px;top:52.20px"></i>
<i class="hd" style="left:734.00px;top:52.20px"></i>
<i class="sep" style="left:477.4px;top:52.2px"></i>
<i class="sep" style="left:521.6px;top:52.2px"></i>
<span class="t" style="left:1.6px;top:73.00px;font-size:6.50px;letter-spacing:-0.049px;">Browser</span>
<svg class="ic" style="left:159.600px;top:73.3px;width:16px;height:7.400px" viewBox="0 0 16 7.400"><rect x=".4" y=".4" width="6.600" height="6.600" rx="1.500" fill="#f6f6f6" stroke="#6e6e6e" stroke-width=".8"/><path d="M2.300 2.900h2.400v2.400h-2.400zM3.200 2.900v-.9h2.400v2.400h-.9" fill="none" stroke="#555" stroke-width=".6"/><rect x="8.600" y=".4" width="6.600" height="6.600" rx="1.500" fill="#f6f6f6" stroke="#6e6e6e" stroke-width=".8"/><path d="M10.300 2.100l3.200 3.200M13.500 2.100l-3.200 3.200" stroke="#333" stroke-width="1"/></svg>
<svg class="ic" style="left:3.80px;top:85.90px;width:10.8px;height:10.8px;" viewBox="0 0 16 16"><rect x="2" y="2" width="10" height="9" rx="1" fill="#f8f8f8" stroke="#888" stroke-width="1"/><rect x="9" y="9" width="5" height="5" rx="1" fill="#fff" stroke="#6a9a5a" stroke-width="1"/></svg>
<svg class="ic" style="left:18.80px;top:85.90px;width:10.8px;height:10.8px;" viewBox="0 0 16 16"><path d="M1.500 7.500a6.500 6.500 0 0 1 11-4l1.700-1.700v5.700h-5.700l1.900-1.900a3.300 3.300 0 0 0-5.400 1.900z" fill="#4a8cd2" stroke="#3a74b8" stroke-width=".5"/><path d="M14.500 8.500a6.500 6.500 0 0 1-11 4l-1.700 1.700v-5.700h5.700l-1.900 1.900a3.300 3.300 0 0 0 5.400-1.900z" fill="#4a8cd2" stroke="#3a74b8" stroke-width=".5"/></svg>
<svg class="ic" style="left:34.10px;top:85.90px;width:10.8px;height:10.8px;" viewBox="0 0 16 16"><path d="M1.500 3h13l-5 5.500v6h-3v-6z" fill="#7a9fb8" stroke="#6288a4" stroke-width=".5"/><ellipse cx="8" cy="3" rx="6.500" ry="2" fill="#c6d6ae" stroke="#a8bc8c" stroke-width=".5"/></svg>
<svg class="ic" style="left:48.80px;top:85.90px;width:10.8px;height:10.8px;" viewBox="0 0 16 16"><rect x="2" y="3" width="5" height="11" fill="#f0f0f0" stroke="#999" stroke-width=".7"/><path d="M3 5h2M3 8h2M3 11h2" stroke="#d89a3a" stroke-width="1"/><path d="M9.800 14.500v-6.500h-2.800l4.500-6.500 4.500 6.500h-2.800v6.500z" fill="#2f5580"/></svg>
<svg class="ic" style="left:63.60px;top:85.90px;width:10.8px;height:10.8px;" viewBox="0 0 16 16"><circle cx="8" cy="8" r="6.200" fill="#6a90c2" stroke="#5078ac" stroke-width=".6"/><path d="M8 7.200v4.300" stroke="#fff" stroke-width="1.700"/><circle cx="8" cy="4.800" r="1" fill="#fff"/></svg>
<div class="tree" style="left:.6px;top:101.2px;width:175.6px;height:261.600px"></div>
<div class="abs" style="left:167.200px;top:101.800px;width:8.200px;height:260.400px;background:#f6f6f6;border-left:.5px solid #e6e6e6;box-sizing:border-box"></div>
<div class="abs" style="left:167.600px;top:343px;width:7.600px;height:9.600px;background:#d6d6d6"></div>
<div class="abs" style="left:167.600px;top:353px;width:7.600px;height:8.800px;background:#f4f4f4;border:.5px solid #d0d0d0;box-sizing:border-box"></div>
<div class="arr" style="left:169.2px;top:104.5px;border-width:0 2px 2.600px 2px;border-color:transparent transparent #555 transparent"></div>
<div class="arr d" style="left:169.400px;top:356.200px;border-top-color:#444"></div>
<svg class="ic" style="left:11.50px;top:102.50px;width:10px;height:10px;" viewBox="0 0 16 16"><path d="M8 1.200l2 4.600 5 .4-3.800 3.300 1.200 4.900-4.400-2.700-4.400 2.700 1.200-4.900-3.800-3.300 5-.4z" fill="#fdf7b8" stroke="#dcc22e" stroke-width="1.300" stroke-linejoin="round"/></svg>
<span class="t" style="left:24.6px;top:103.00px;font-size:6.50px;letter-spacing:0.030px;">Favorites</span>
<svg class="ic" style="left:11.50px;top:113.28px;width:10px;height:10px;" viewBox="0 0 16 16"><rect x="2" y="1.500" width="12" height="13" rx="1" fill="#e4e4e4" stroke="#a8a8a8" stroke-width=".9"/><path d="M2.500 2v12" stroke="#999" stroke-width="1.400"/><path d="M8 1.500h3.500v6l-1.750-1.500-1.750 1.500z" fill="#6089ba"/></svg>
<span class="t" style="left:24.6px;top:114.00px;font-size:6.50px;letter-spacing:-0.159px;">Spatial Bookmarks</span>
<i class="arr r" style="left:4.200px;top:116.28px"></i>
<svg class="ic" style="left:11.50px;top:124.06px;width:10px;height:10px;" viewBox="0 0 16 16"><rect x="1.500" y="2" width="13" height="12" fill="#8fd05a" stroke="#5a9a34" stroke-width=".9"/><path d="M2 3l7 7M9 5l4 3-4 2z" fill="#2d6e22" stroke="#e6f5d6" stroke-width=".7"/></svg>
<span class="t" style="left:24.6px;top:125.00px;font-size:6.50px;letter-spacing:-0.090px;">Project Home</span>
<i class="arr r" style="left:4.200px;top:127.06px"></i>
<svg class="ic" style="left:11.50px;top:134.84px;width:10px;height:10px;" viewBox="0 0 16 16"><path d="M1.500 3h4l1.500 1.500h7.500v10h-13z" fill="#fbfbfb" stroke="#8a8a8a" stroke-width=".9"/><path d="M5 10l3.500-3 3.500 3v3.500h-7z" fill="#fff" stroke="#555" stroke-width=".9"/></svg>
<span class="t" style="left:24.6px;top:135.00px;font-size:6.50px;letter-spacing:-0.336px;">Home</span>
<i class="arr r" style="left:4.200px;top:137.84px"></i>
<svg class="ic" style="left:11.50px;top:145.62px;width:10px;height:10px;" viewBox="0 0 16 16"><path d="M1.500 3h4l1.500 1.500h7.500v10h-13z" fill="#fbfbfb" stroke="#9a9a9a" stroke-width=".9"/></svg>
<span class="t" style="left:24.6px;top:146.00px;font-size:6.50px;letter-spacing:0.229px;">C:\</span>
<i class="arr r" style="left:4.200px;top:148.62px"></i>
<svg class="ic" style="left:11.50px;top:156.40px;width:10px;height:10px;" viewBox="0 0 16 16"><path d="M1 6l6-4 8 2.500v6.500l-6.500 4-7.500-3z" fill="#e8c93a" stroke="#8a7418" stroke-width=".9"/><path d="M3.500 5.500l4-2.700 5 1.600-3.800 2.600z" fill="#4a7fb8"/><path d="M1 6l7.500 2.500 6.500-4M8.500 8.500v6.500" fill="none" stroke="#8a7418" stroke-width=".8"/></svg>
<span class="t" style="left:24.6px;top:157.00px;font-size:6.50px;letter-spacing:-0.209px;">GeoPackage</span>
<svg class="ic" style="left:11.50px;top:167.18px;width:10px;height:10px;" viewBox="0 0 16 16"><path d="M1.500 14.500c1-5 5-11 12.500-13-1 5-4.500 9-9.500 10.500z" fill="#4a78b3" stroke="#2e5a94" stroke-width=".6"/><path d="M1.500 14.500l5-6.500" stroke="#dfe8f3" stroke-width=".6"/></svg>
<span class="t" style="left:24.6px;top:168.00px;font-size:6.50px;letter-spacing:-0.062px;">SpatiaLite</span>
<svg class="ic" style="left:11.50px;top:177.96px;width:10px;height:10px;" viewBox="0 0 16 16"><path d="M2 2h12v7c0 2-1 3-2.500 3v2.500h-3v-2.500h-2c-3 0-4.500-1.500-4.500-4z" fill="#4a7ab5" stroke="#2e5a94" stroke-width=".7"/><circle cx="6" cy="5.500" r="1" fill="#dfe8f3"/><path d="M10.500 4v5" stroke="#dfe8f3" stroke-width=".9"/></svg>
<span class="t" style="left:24.6px;top:178.00px;font-size:6.50px;letter-spacing:-0.192px;">PostgreSQL</span>
<svg class="ic" style="left:11.50px;top:188.74px;width:10px;height:10px;" viewBox="0 0 16 16"><rect x="3" y="3" width="10" height="10" fill="#5b86b8"/><rect x="1.500" y="1.500" width="13" height="13" fill="none" stroke="#8fb0d6" stroke-width="1" stroke-dasharray="1.500 1"/></svg>
<span class="t" style="left:24.6px;top:189.00px;font-size:6.50px;letter-spacing:-0.346px;">SAP HANA</span>
<svg class="ic" style="left:11.50px;top:199.52px;width:10px;height:10px;" viewBox="0 0 16 16"><path d="M3 3l6-1.500 4 3.500-1.500 7-6 1.500-4-4z" fill="#dfe6ee" stroke="#a9b6c4" stroke-width=".8"/><path d="M6 6l5 1-1 5-4-1z" fill="#8fb0d6"/></svg>
<span class="t" style="left:24.6px;top:200.00px;font-size:6.50px;letter-spacing:-0.365px;">STAC</span>
<svg class="ic" style="left:11.50px;top:210.30px;width:10px;height:10px;" viewBox="0 0 16 16"><path d="M1.500 3l12 3.500-5 2 5 3.500-12 2.500 2.500-5.500z" fill="#4a7ab5" stroke="#2e5a94" stroke-width=".6"/></svg>
<span class="t" style="left:24.6px;top:211.00px;font-size:6.50px;letter-spacing:-0.229px;">MS SQL Server</span>
<svg class="ic" style="left:11.50px;top:221.08px;width:10px;height:10px;" viewBox="0 0 16 16"><rect x="1.500" y="3.500" width="13" height="9.500" rx="4" fill="#5b86b8" stroke="#2e5a94" stroke-width="1"/></svg>
<span class="t" style="left:24.6px;top:222.00px;font-size:6.50px;letter-spacing:-0.109px;">Oracle</span>
<svg class="ic" style="left:11.50px;top:231.86px;width:10px;height:10px;" viewBox="0 0 16 16"><circle cx="8" cy="8" r="6.500" fill="#5b86b8" stroke="#46709f" stroke-width=".7"/><path d="M4 5c2-1.500 3 .5 2.500 2s-2 1.500-2.500 3.500M9 3c2.500 0 3.500 1.500 3 3s-2.500 1-2 3 2 2 3 .5" fill="none" stroke="#dce8f5" stroke-width="1.300"/></svg>
<span class="t" style="left:24.6px;top:232.00px;font-size:6.50px;letter-spacing:-0.381px;">WMS/WMTS</span>
<svg class="ic" style="left:11.50px;top:242.64px;width:10px;height:10px;" viewBox="0 0 16 16"><path d="M4 12.500a3 3 0 0 1 .3-6 4 4 0 0 1 7.700.5 2.800 2.800 0 0 1 0 5.500z" fill="#eef2f6" stroke="#6f87a3" stroke-width="1"/></svg>
<span class="t" style="left:24.6px;top:243.00px;font-size:6.50px;letter-spacing:-0.097px;">Cloud</span>
<svg class="ic" style="left:11.50px;top:253.42px;width:10px;height:10px;" viewBox="0 0 16 16"><path d="M8 1.500l6 3v7l-6 3-6-3v-7z" fill="#e8eef5" stroke="#6f87a3" stroke-width=".9"/><path d="M2 4.500l6 3 6-3M8 7.500v7" fill="none" stroke="#6f87a3" stroke-width=".8"/><circle cx="8" cy="8" r="2" fill="#8fb0d6"/></svg>
<span class="t" style="left:24.6px;top:254.00px;font-size:6.50px;letter-spacing:-0.198px;">Scenes</span>
<svg class="ic" style="left:11.50px;top:264.20px;width:10px;height:10px;" viewBox="0 0 16 16"><circle cx="8" cy="8" r="2" fill="#555"/><path d="M4.500 4.500a5 5 0 0 0 0 7M11.500 4.500a5 5 0 0 1 0 7M2.300 2.500a8 8 0 0 0 0 11M13.700 2.500a8 8 0 0 1 0 11" fill="none" stroke="#8a8a8a" stroke-width="1"/></svg>
<span class="t" style="left:24.6px;top:265.00px;font-size:6.50px;letter-spacing:-0.134px;">SensorThings</span>
<svg class="ic" style="left:11.50px;top:274.98px;width:10px;height:10px;" viewBox="0 0 16 16"><rect x="1.500" y="1.500" width="13" height="13" fill="#3f5f86"/><path d="M1.500 6h13M1.500 10.200h13M6 1.500v13M10.200 1.500v13" stroke="#e8eef5" stroke-width="1"/></svg>
<span class="t" style="left:24.6px;top:275.00px;font-size:6.50px;letter-spacing:-0.051px;">Vector Tiles</span>
<svg class="ic" style="left:11.50px;top:285.76px;width:10px;height:10px;" viewBox="0 0 16 16"><g fill="#6b96cc"><rect x="2.2" y="0.8" width="2.900" height="2.700"/><rect x="2.2" y="4.6" width="2.900" height="2.700"/><rect x="2.2" y="8.4" width="2.900" height="2.700"/><rect x="2.2" y="12.2" width="2.900" height="2.700"/><rect x="6.4" y="0.8" width="2.900" height="2.700"/><rect x="6.4" y="4.6" width="2.900" height="2.700"/><rect x="6.4" y="8.4" width="2.900" height="2.700"/><rect x="6.4" y="12.2" width="2.900" height="2.700"/><rect x="10.6" y="0.8" width="2.900" height="2.700"/><rect x="10.6" y="4.6" width="2.900" height="2.700"/><rect x="10.6" y="8.4" width="2.900" height="2.700"/><rect x="10.6" y="12.2" width="2.900" height="2.700"/></g></svg>
<span class="t" style="left:24.6px;top:286.00px;font-size:6.50px;letter-spacing:-0.279px;">XYZ Tiles</span>
<i class="arr d" style="left:3.500px;top:289.46px"></i>
<svg class="ic" style="left:20.80px;top:296.54px;width:10px;height:10px;" viewBox="0 0 16 16"><g fill="#6b96cc"><rect x="2.2" y="0.8" width="2.900" height="2.700"/><rect x="2.2" y="4.6" width="2.900" height="2.700"/><rect x="2.2" y="8.4" width="2.900" height="2.700"/><rect x="2.2" y="12.2" width="2.900" height="2.700"/><rect x="6.4" y="0.8" width="2.900" height="2.700"/><rect x="6.4" y="4.6" width="2.900" height="2.700"/><rect x="6.4" y="8.4" width="2.900" height="2.700"/><rect x="6.4" y="12.2" width="2.900" height="2.700"/><rect x="10.6" y="0.8" width="2.900" height="2.700"/><rect x="10.6" y="4.6" width="2.900" height="2.700"/><rect x="10.6" y="8.4" width="2.900" height="2.700"/><rect x="10.6" y="12.2" width="2.900" height="2.700"/></g></svg>
<span class="t" style="left:33.9px;top:297.00px;font-size:6.50px;letter-spacing:-0.170px;">Google Maps</span>
<svg class="ic" style="left:20.80px;top:307.32px;width:10px;height:10px;" viewBox="0 0 16 16"><g fill="#6b96cc"><rect x="2.2" y="0.8" width="2.900" height="2.700"/><rect x="2.2" y="4.6" width="2.900" height="2.700"/><rect x="2.2" y="8.4" width="2.900" height="2.700"/><rect x="2.2" y="12.2" width="2.900" height="2.700"/><rect x="6.4" y="0.8" width="2.900" height="2.700"/><rect x="6.4" y="4.6" width="2.900" height="2.700"/><rect x="6.4" y="8.4" width="2.900" height="2.700"/><rect x="6.4" y="12.2" width="2.900" height="2.700"/><rect x="10.6" y="0.8" width="2.900" height="2.700"/><rect x="10.6" y="4.6" width="2.900" height="2.700"/><rect x="10.6" y="8.4" width="2.900" height="2.700"/><rect x="10.6" y="12.2" width="2.900" height="2.700"/></g></svg>
<span class="t" style="left:33.9px;top:308.00px;font-size:6.50px;letter-spacing:-0.087px;">Google Satellite</span>
<svg class="ic" style="left:20.80px;top:318.10px;width:10px;height:10px;" viewBox="0 0 16 16"><g fill="#6b96cc"><rect x="2.2" y="0.8" width="2.900" height="2.700"/><rect x="2.2" y="4.6" width="2.900" height="2.700"/><rect x="2.2" y="8.4" width="2.900" height="2.700"/><rect x="2.2" y="12.2" width="2.900" height="2.700"/><rect x="6.4" y="0.8" width="2.900" height="2.700"/><rect x="6.4" y="4.6" width="2.900" height="2.700"/><rect x="6.4" y="8.4" width="2.900" height="2.700"/><rect x="6.4" y="12.2" width="2.900" height="2.700"/><rect x="10.6" y="0.8" width="2.900" height="2.700"/><rect x="10.6" y="4.6" width="2.900" height="2.700"/><rect x="10.6" y="8.4" width="2.900" height="2.700"/><rect x="10.6" y="12.2" width="2.900" height="2.700"/></g></svg>
<span class="t" style="left:33.9px;top:319.00px;font-size:6.50px;letter-spacing:-0.085px;">Mapzen Global Terrain</span>
<svg class="ic" style="left:20.80px;top:328.88px;width:10px;height:10px;" viewBox="0 0 16 16"><g fill="#6b96cc"><rect x="2.2" y="0.8" width="2.900" height="2.700"/><rect x="2.2" y="4.6" width="2.900" height="2.700"/><rect x="2.2" y="8.4" width="2.900" height="2.700"/><rect x="2.2" y="12.2" width="2.900" height="2.700"/><rect x="6.4" y="0.8" width="2.900" height="2.700"/><rect x="6.4" y="4.6" width="2.900" height="2.700"/><rect x="6.4" y="8.4" width="2.900" height="2.700"/><rect x="6.4" y="12.2" width="2.900" height="2.700"/><rect x="10.6" y="0.8" width="2.900" height="2.700"/><rect x="10.6" y="4.6" width="2.900" height="2.700"/><rect x="10.6" y="8.4" width="2.900" height="2.700"/><rect x="10.6" y="12.2" width="2.900" height="2.700"/></g></svg>
<span class="t" style="left:33.9px;top:329.00px;font-size:6.50px;letter-spacing:-0.030px;">OpenStreetMap</span>
<svg class="ic" style="left:11.50px;top:339.66px;width:10px;height:10px;" viewBox="0 0 16 16"><circle cx="8" cy="8" r="6.500" fill="#4a7ab5" stroke="#2e5a94" stroke-width=".8"/><path d="M4 6c1.500-1 2.500 0 2 1.500M9.500 5.500c1.500-1 2.500 0 2 1.500M4.500 10.500c2 2 5 2 7 0" fill="none" stroke="#dce8f5" stroke-width="1.400"/></svg>
<span class="t" style="left:24.6px;top:340.00px;font-size:6.50px;letter-spacing:-0.557px;">WCS</span>
<svg class="ic" style="left:11.50px;top:350.44px;width:10px;height:10px;" viewBox="0 0 16 16"><circle cx="8" cy="8" r="6.500" fill="#f8f8f8" stroke="#8aa5c4" stroke-width="1"/><path d="M3.500 4.500l3.500 8 3-8M11 5.500a3 3 0 0 1 0 5" fill="none" stroke="#6f87a3" stroke-width="1"/></svg>
<span class="t" style="left:24.6px;top:351.00px;font-size:6.50px;letter-spacing:-0.085px;">WFS / OGC API - Features</span>
<span class="t" style="left:1.6px;top:368.00px;font-size:6.50px;letter-spacing:-0.036px;">Layers</span>
<svg class="ic" style="left:159.600px;top:368.3px;width:16px;height:7.400px" viewBox="0 0 16 7.400"><rect x=".4" y=".4" width="6.600" height="6.600" rx="1.500" fill="#f6f6f6" stroke="#6e6e6e" stroke-width=".8"/><path d="M2.300 2.900h2.400v2.400h-2.400zM3.200 2.900v-.9h2.400v2.400h-.9" fill="none" stroke="#555" stroke-width=".6"/><rect x="8.600" y=".4" width="6.600" height="6.600" rx="1.500" fill="#f6f6f6" stroke="#6e6e6e" stroke-width=".8"/><path d="M10.300 2.100l3.200 3.200M13.500 2.100l-3.200 3.200" stroke="#333" stroke-width="1"/></svg>
<svg class="ic" style="left:3.50px;top:381.20px;width:11px;height:11px;" viewBox="0 0 16 16"><path d="M2.500 9.500l5-3.500 3 3-5 3.500c-1.500.5-3.500-1.500-3-3z" fill="#e8a83a" stroke="#b87a22" stroke-width=".6"/><path d="M9 7.500l5-4.500" stroke="#c8782a" stroke-width="2" stroke-linecap="round"/><path d="M2 11.500l2.500 2-3 .5z" fill="#b8452d"/></svg>
<svg class="ic" style="left:19.00px;top:381.20px;width:11px;height:11px;" viewBox="0 0 16 16"><path d="M3 14v-7l2-4h2v11z" fill="#e8e8e8" stroke="#9a9a9a" stroke-width=".8"/><path d="M8 14v-11h2l2 4v7z" fill="#dcdcdc" stroke="#9a9a9a" stroke-width=".8"/><circle cx="6" cy="6" r="1" fill="#7aa86a"/></svg>
<svg class="ic" style="left:34.00px;top:381.20px;width:11px;height:11px;" viewBox="0 0 16 16"><path d="M1 7.500c2-3.500 4.500-4.500 6.500-4.500s4.500 1 6.500 4.500c-2 3.500-4.500 4.500-6.500 4.500s-4.500-1-6.500-4.500z" fill="#e8ecf0" stroke="#9aa4ae" stroke-width=".8"/><circle cx="7.500" cy="7.500" r="2.600" fill="#5b7fa6"/><circle cx="7.500" cy="7.500" r="1.100" fill="#223"/><path d="M10.500 13h4l-2 2.500z" fill="#444"/></svg>
<svg class="ic" style="left:49.00px;top:381.20px;width:11px;height:11px;" viewBox="0 0 16 16"><path d="M1.500 3h13l-5 5.500v6h-3v-6z" fill="#7a9fb8" stroke="#6288a4" stroke-width=".5"/><ellipse cx="8" cy="3" rx="6.500" ry="2" fill="#c6d6ae" stroke="#a8bc8c" stroke-width=".5"/><path d="M11 13h4l-2 2.500z" fill="#444"/></svg>
<svg class="ic" style="left:63.50px;top:381.20px;width:11px;height:11px;" viewBox="0 0 16 16"><text x="1" y="10.500" font-size="13" font-family="Liberation Serif, serif" fill="#444">ε</text><rect x="8.500" y="9" width="5.500" height="5.500" fill="#f6f6f6" stroke="#777" stroke-width=".8"/></svg>
<svg class="ic" style="left:86.00px;top:381.20px;width:11px;height:11px;" viewBox="0 0 16 16"><rect x="1.500" y="3" width="5" height="11" fill="#f0f0f0" stroke="#999" stroke-width=".7"/><path d="M2.500 5h2M2.500 8h2M2.500 11h2" stroke="#d89a3a" stroke-width="1"/><path d="M9.300 1.500v6.500h-2.800l4.500 6.500 4.500-6.500h-2.800v-6.500z" fill="#2f5580"/></svg>
<svg class="ic" style="left:101.00px;top:381.20px;width:11px;height:11px;" viewBox="0 0 16 16"><rect x="2" y="3" width="5" height="11" fill="#f0f0f0" stroke="#999" stroke-width=".7"/><path d="M3 5h2M3 8h2M3 11h2" stroke="#d89a3a" stroke-width="1"/><path d="M9.800 14.500v-6.500h-2.800l4.500-6.500 4.500 6.500h-2.800v6.500z" fill="#2f5580"/></svg>
<svg class="ic" style="left:115.50px;top:381.20px;width:11px;height:11px;" viewBox="0 0 16 16"><rect x="2" y="2" width="10" height="10" rx="1" fill="#f8f8f8" stroke="#888" stroke-width="1"/><circle cx="12" cy="12" r="2.600" fill="#fff" stroke="#d8232a" stroke-width="1.100"/><path d="M10.500 12h3" stroke="#d8232a" stroke-width="1"/></svg>
<svg class="ic" style="left:77.80px;top:385.70px;width:4.400px;height:2.600px" viewBox="0 0 5 3"><path d="M0 0h5l-2.500 3z" fill="#444"/></svg>
<div class="tree" style="left:.6px;top:396.4px;width:175.6px;height:281.400px"></div>
<div class="abs" style="left:2.800px;top:407.800px;width:170.400px;height:9.800px;background:#0c78d2"></div>
<div class="red" style="left:0;top:405px;width:176.200px;height:15.600px"></div>
<div class="red" style="left:0;top:428px;width:176.200px;height:13.700px"></div>
<i class="cb dim" style="left:14.600px;top:398.50px"></i>
<svg class="ic" style="left:27px;top:398.50px;width:8px;height:8px" viewBox="-4 -4 8 8"><circle r="2.4" fill="#eeb040" stroke="#b88220" stroke-width=".6"/></svg>
<span class="t" style="left:39.5px;top:398.00px;font-weight:700;font-style:italic;color:#7c7c7c;font-size:6.90px;letter-spacing:0.245px;">My_Measurements_3</span>
<i class="cb on" style="left:14.600px;top:409.40px"></i>
<svg class="ic" style="left:27px;top:409.40px;width:8px;height:8px" viewBox="-4 -4 8 8"><circle r="2.4" fill="#c070f0" stroke="#b58ae0" stroke-width=".6"/></svg>
<span class="t" style="left:39.5px;top:409.00px;font-weight:700;font-style:italic;color:#fff;font-size:6.90px;letter-spacing:0.245px;"><u>My_Measurements_2</u></span>
<i class="cb dim" style="left:14.600px;top:420.30px"></i>
<svg class="ic" style="left:27px;top:420.30px;width:8px;height:8px" viewBox="-4 -4 8 8"><circle r="2.4" fill="#4cbb48" stroke="#3a9a34" stroke-width=".6"/></svg>
<span class="t" style="left:39.5px;top:420.00px;font-weight:700;font-style:italic;color:#7c7c7c;font-size:6.90px;letter-spacing:0.245px;">My_Measurements_1</span>
<i class="cb on" style="left:14.600px;top:431.00px"></i>
<svg class="ic" style="left:27px;top:431.00px;width:8px;height:8px" viewBox="-4 -4 8 8"><circle r="1.7" fill="#8c2a38" stroke="#6a1a26" stroke-width=".6"/></svg>
<span class="t" style="left:39.5px;top:431.00px;font-weight:700;color:#000;font-size:6.90px;letter-spacing:0.136px;">grenzpunkt</span>
<i class="cb on" style="left:14.600px;top:441.80px"></i>
<div class="abs" style="left:26px;top:442.40px;width:9.600px;height:7.400px;background:#c6f0cd"></div>
<span class="t" style="left:39.5px;top:441.00px;font-weight:700;color:#000;font-size:6.90px;letter-spacing:0.106px;">flurstueck</span>
<i class="cb" style="left:14.600px;top:452.60px"></i>
<svg class="ic" style="left:26.50px;top:452.60px;width:8px;height:8px;" viewBox="0 0 16 16"><g fill="#1f2f4a"><rect x="2" y="2" width="4" height="4"/><rect x="10" y="2" width="4" height="4"/><rect x="6" y="6" width="4" height="4"/><rect x="2" y="10" width="4" height="4"/></g><g fill="#5b86b8"><rect x="6" y="2" width="4" height="4" opacity=".5"/><rect x="10" y="6" width="4" height="4"/><rect x="6" y="10" width="4" height="4" opacity=".6"/></g></svg>
<span class="t" style="left:39.5px;top:452.00px;font-style:italic;color:#7c7c7c;font-size:6.50px;letter-spacing:0.585px;">OpenStreetMap</span>
<i class="arr d" style="left:4.200px;top:455.30px"></i>
<i class="cb" style="left:14.600px;top:463.30px"></i>
<svg class="ic" style="left:26.50px;top:463.30px;width:8px;height:8px;" viewBox="0 0 16 16"><g fill="#1f2f4a"><rect x="2" y="2" width="4" height="4"/><rect x="10" y="2" width="4" height="4"/><rect x="6" y="6" width="4" height="4"/><rect x="2" y="10" width="4" height="4"/></g><g fill="#5b86b8"><rect x="6" y="2" width="4" height="4" opacity=".5"/><rect x="10" y="6" width="4" height="4"/><rect x="6" y="10" width="4" height="4" opacity=".6"/></g></svg>
<span class="t" style="left:39.5px;top:463.00px;font-style:italic;color:#7c7c7c;font-size:6.50px;letter-spacing:0.444px;">Google Satellite</span>
<i class="arr d" style="left:4.200px;top:466.00px"></i>
<i class="cb on" style="left:14.600px;top:474.00px"></i>
<svg class="ic" style="left:26.50px;top:474.00px;width:8px;height:8px;" viewBox="0 0 16 16"><g fill="#1f2f4a"><rect x="2" y="2" width="4" height="4"/><rect x="10" y="2" width="4" height="4"/><rect x="6" y="6" width="4" height="4"/><rect x="2" y="10" width="4" height="4"/></g><g fill="#5b86b8"><rect x="6" y="2" width="4" height="4" opacity=".5"/><rect x="10" y="6" width="4" height="4"/><rect x="6" y="10" width="4" height="4" opacity=".6"/></g></svg>
<span class="t" style="left:39.5px;top:474.00px;font-weight:700;color:#000;font-size:6.90px;letter-spacing:-0.061px;">Google Maps</span>
<i class="arr d" style="left:4.200px;top:476.70px"></i>
<div class="box" style="left:2.400px;top:679.600px;width:119.800px;height:12.400px"></div>
<svg class="ic" style="left:6.500px;top:682.200px;width:7px;height:7px" viewBox="0 0 7 7"><circle cx="2.800" cy="2.800" r="2.100" fill="none" stroke="#666" stroke-width=".7"/><path d="M4.300 4.300l2.200 2.200" stroke="#666" stroke-width=".8"/></svg>
<span class="t" style="left:19.6px;top:681.00px;color:#6a6a6a;font-size:6.50px;letter-spacing:0.071px;">Type to locate (Ctrl+K)</span>
<span class="t" style="left:457.7px;top:681.00px;font-size:6.50px;letter-spacing:-0.051px;">Coordinate</span>
<div class="box" style="left:491.600px;top:679.600px;width:81.800px;height:12.300px"></div>
<span class="t" style="left:496.2px;top:681.00px;font-size:6.50px;letter-spacing:0.014px;">1046871,68  6342788,65</span>
<svg class="ic" style="left:575.500px;top:680.500px;width:10px;height:10px" viewBox="0 0 10 10"><circle cx="4" cy="4" r="2.600" fill="none" stroke="#444" stroke-width=".9"/><circle cx="6.200" cy="6" r="2.600" fill="none" stroke="#444" stroke-width=".9"/><path d="M1.500 1l7 8" stroke="#444" stroke-width=".7"/></svg>
<span class="t" style="left:593.2px;top:681.00px;font-size:6.50px;letter-spacing:-0.413px;">Scale</span>
<div class="box" style="left:610.400px;top:679.600px;width:48px;height:12.300px"></div>
<span class="t" style="left:613.6px;top:681.00px;font-size:6.50px;letter-spacing:-0.256px;">1:320</span>
<div class="abs" style="left:646.500px;top:680.200px;width:.5px;height:11.100px;background:#d8d8d8"></div>
<svg class="ic" style="left:650.20px;top:684.50px;width:4.400px;height:2.600px" viewBox="0 0 5 3"><path d="M0 0h5l-2.500 3z" fill="#444"/></svg>
<svg class="ic" style="left:665.200px;top:680.800px;width:8px;height:9.500px" viewBox="0 0 8 9.500"><path d="M2 4.500v-1.800a2 2 0 0 1 4 0v1.800" fill="none" stroke="#666" stroke-width="1.100"/><rect x=".8" y="4.300" width="6.400" height="4.600" rx=".6" fill="#6e6e6e"/></svg>
<span class="t" style="left:677.2px;top:681.00px;font-size:6.50px;letter-spacing:-0.082px;">Magnifier</span>
<div class="box" style="left:706.600px;top:679.600px;width:49.600px;height:12.300px"></div>
<span class="t" style="left:710px;top:681.00px;font-size:6.50px;letter-spacing:0.044px;">100%</span>
<div class="box" style="left:792px;top:679.600px;width:49.600px;height:12.300px"></div>
<span class="t" style="left:795.4px;top:681.00px;font-size:6.50px;letter-spacing:0.189px;">0,0 °</span>
<svg class="ic" style="left:749.3px;top:681.300px;width:5px;height:9px" viewBox="0 0 5 9"><path d="M.3 3.300l2.200-2.600 2.200 2.600zM.3 5.700l2.200 2.600 2.200-2.600z" fill="#444"/></svg>
<svg class="ic" style="left:834.7px;top:681.300px;width:5px;height:9px" viewBox="0 0 5 9"><path d="M.3 3.300l2.200-2.600 2.200 2.600zM.3 5.700l2.200 2.600 2.200-2.600z" fill="#444"/></svg>
<span class="t" style="left:761.8px;top:681.00px;font-size:6.50px;letter-spacing:-0.002px;">Rotation</span>
<i class="cb on" style="left:845.800px;top:682.400px;width:7px;height:7px"></i>
<span class="t" style="left:857px;top:681.00px;font-size:6.50px;letter-spacing:-0.171px;">Render</span>
<svg class="ic" style="left:885.500px;top:681.200px;width:9.500px;height:9.500px" viewBox="0 0 10 10"><circle cx="5" cy="5" r="4.200" fill="#9a9a9a" stroke="#666" stroke-width=".6"/><path d="M.8 5h8.400M5 .8v8.400M2 2.500c2 1 4 1 6 0M2 7.500c2-1 4-1 6 0" fill="none" stroke="#e8e8e8" stroke-width=".5"/></svg>
<span class="t" style="left:896.8px;top:681.00px;font-size:6.50px;letter-spacing:-0.236px;">EPSG:3857</span>
<svg class="ic" style="left:943.500px;top:681.200px;width:10px;height:9.500px" viewBox="0 0 10 9.500"><path d="M5 .6c2.500 0 4.400 1.400 4.400 3.300s-1.900 3.300-4.400 3.300c-.4 0-.8 0-1.200-.1l-2 1.700.4-2.400c-1-.6-1.600-1.500-1.600-2.500 0-1.900 1.900-3.300 4.400-3.300z" fill="#5e5e5e"/></svg>
<svg class="ic" id="map" style="overflow:hidden;left:179.200px;top:71.200px;width:776.800px;height:605.800px" viewBox="179.200 71.200 776.800 605.800"><defs><filter id="bl" x="-5%" y="-5%" width="110%" height="110%"><feGaussianBlur stdDeviation="1.800"/></filter><filter id="bt" x="-10%" y="-40%" width="120%" height="180%"><feMorphology in="SourceAlpha" operator="dilate" radius="4.800" result="h"/><feGaussianBlur in="h" stdDeviation="2.600" result="hb"/><feFlood flood-color="#3c826a"/><feComposite in2="hb" operator="in" result="hc"/><feMorphology in="SourceAlpha" operator="dilate" radius=".6" result="f"/><feGaussianBlur in="f" stdDeviation="1.100" result="fb"/><feFlood flood-color="#b6f2d2"/><feComposite in2="fb" operator="in" result="fc"/><feMerge><feMergeNode in="hc"/><feMergeNode in="fc"/></feMerge></filter></defs><rect x="170" y="60" width="800" height="630" fill="#a7eebd"/><path d="M170,60 L341,60 L360,71 L672,176.500 L694.500,71 L697,60 L764,60 L761,71 L739,184 L729,230 L721,320 L706,480 L681,677 L679,690 L613,690 L615,677 L640,480 L654.500,320 L656,264 Q656,247 644,240 L180,79 L170,75.500 Z" fill="#92ceb4" filter="url(#bl)"/><g filter="url(#bt)" transform="translate(692.300 438) rotate(-84) scale(1.03 1)"><text x="-233.3 -211.8 -185.0 -154.0 -127.9 -103.2 -71.3 -48.4 -27.1 0.3 26.7 50.9 82.5" y="0" text-anchor="middle" rotate="-3" font-family="Liberation Sans, sans-serif" font-weight="700" font-size="47" fill="#b4f0cc">ta-Rigel-Ring</text></g><g transform="translate(.1 .3)"><path d="M180,101 L444,200 L623.200,264.800 A70 70 0 0 1 668.700,338 L683,339 L659.400,568.800 L650.500,677" fill="none" stroke="#447a5e" stroke-width=".6"/><path d="M444,200 L321,534 L307.700,677" fill="none" stroke="#447a5e" stroke-width=".6"/><path d="M180.200,485.400 L321,534 L659.400,568.800" fill="none" stroke="#447a5e" stroke-width=".6"/><path d="M330.800,71 L594,169 A85 85 0 0 0 707.400,98 L710.600,71" fill="none" stroke="#447a5e" stroke-width=".6"/><path d="M775.900,71 L765.500,172.300 L742.300,399 L719,625.800 L713.700,677" fill="none" stroke="#447a5e" stroke-width=".6"/><path d="M765.500,172.300 L956,192" fill="none" stroke="#447a5e" stroke-width=".6"/><path d="M742.300,399 L956,420.500" fill="none" stroke="#447a5e" stroke-width=".6"/><path d="M719,625.800 L956,650.800" fill="none" stroke="#447a5e" stroke-width=".6"/><circle cx="707.4" cy="98" r="2.350" fill="#b03a2c" stroke="#6e1a10" stroke-width=".9"/><circle cx="594" cy="169" r="2.350" fill="#b03a2c" stroke="#6e1a10" stroke-width=".9"/><circle cx="765.5" cy="172.3" r="2.350" fill="#b03a2c" stroke="#6e1a10" stroke-width=".9"/><circle cx="742.3" cy="399" r="2.350" fill="#b03a2c" stroke="#6e1a10" stroke-width=".9"/><circle cx="719" cy="625.8" r="2.350" fill="#b03a2c" stroke="#6e1a10" stroke-width=".9"/><circle cx="623.2" cy="264.8" r="2.900" fill="#e480d2" stroke="#50264a" stroke-width=".95"/><circle cx="668.7" cy="338" r="2.900" fill="#e480d2" stroke="#50264a" stroke-width=".95"/><circle cx="683" cy="339" r="2.900" fill="#e480d2" stroke="#50264a" stroke-width=".95"/><circle cx="659.4" cy="568.8" r="2.900" fill="#e480d2" stroke="#50264a" stroke-width=".95"/><circle cx="321" cy="534" r="2.900" fill="#e480d2" stroke="#50264a" stroke-width=".95"/></g><g transform="translate(437.600 193.400) scale(.96)"><path d="M5.400 15c-1-1.800-3-3.800-4.200-5.400-.7-1 .6-2 1.600-1.100l1.700 1.500v-6.700c0-1.300 1.800-1.300 1.800 0v-1.300c0-1.300 1.900-1.300 1.900 0v.9c0-1.200 1.900-1.200 1.900.1v1.200c0-1.200 1.800-1.100 1.800.1v6.700c0 1.500-.5 2.700-1.100 4z" fill="#fff" stroke="#1a3a2a" stroke-width="1.100" stroke-linejoin="round"/><path d="M6.300 3.500v4.500M8.200 2.500v5.500M10.100 3.500v4.500" stroke="#33443a" stroke-width=".8"/></g></svg>
<div class="abs" style="left:178.400px;top:70.500px;width:777.600px;height:1px;background:#93b09f"></div>
<div class="abs" style="left:178.200px;top:71.500px;width:1px;height:606px;background:#e4f3e9"></div>
</body></html>
